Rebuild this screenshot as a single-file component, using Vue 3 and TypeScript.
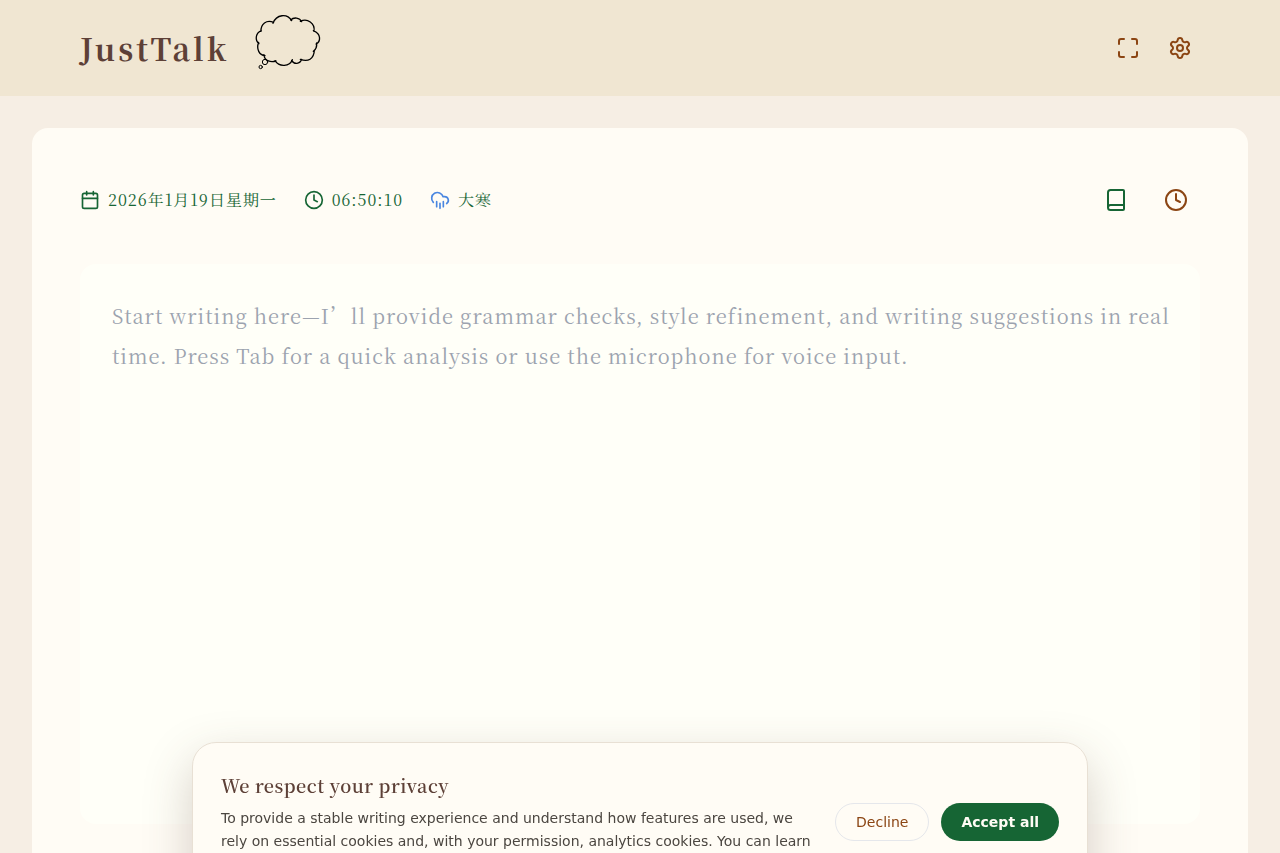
<script setup lang="ts">
import { ref } from 'vue'

const draft = ref('')
const showConsent = ref(true)
const dateLabel = '2026年1月19日星期一'
const timeLabel = '06:50:10'
const solarTerm = '大寒'
const placeholder =
  'Start writing here—I’ll provide grammar checks, style refinement, and writing suggestions in real time. Press Tab for a quick analysis or use the microphone for voice input.'
</script>

<template>
  <div class="page">
    <header class="topbar">
      <div class="brand">
        <h1 class="brand-name">JustTalk</h1>
        <svg class="bubble" viewBox="21 21 216 216" aria-hidden="true">
          <path
            d="M48 79C47 57 64 43 86 52M84 55C94 27 127 25 140 47M137 45C146 36 164 37 170 50M166 49C187 39 211 54 207 79M205 77C230 87 227 110 213 117M215 114C216 126 212 134 205 139M208 136C207 162 189 172 166 163M170 163C165 178 147 179 140 166M142 164C134 185 103 187 90 167M93 168C79 172 58 170 57 149M60 152C43 151 33 132 41 112M42 116C30 107 30 85 49 77"
          />
          <circle cx="60" cy="171" r="8" class="puff" />
          <circle cx="47" cy="186" r="5" class="puff" />
        </svg>
      </div>
      <nav class="actions" aria-label="Application">
        <button class="icon-button brown" type="button" aria-label="Fullscreen">
          <svg class="icon" viewBox="0 0 24 24">
            <path d="M8 3H5a2 2 0 0 0-2 2v3M21 8V5a2 2 0 0 0-2-2h-3M3 16v3a2 2 0 0 0 2 2h3M16 21h3a2 2 0 0 0 2-2v-3" />
          </svg>
        </button>
        <button class="icon-button brown" type="button" aria-label="Settings">
          <svg class="icon" viewBox="0 0 24 24">
            <path d="M9.671 4.136a2.34 2.34 0 0 1 4.659 0 2.34 2.34 0 0 0 3.319 1.915 2.34 2.34 0 0 1 2.33 4.033 2.34 2.34 0 0 0 0 3.831 2.34 2.34 0 0 1-2.33 4.033 2.34 2.34 0 0 0-3.319 1.915 2.34 2.34 0 0 1-4.659 0 2.34 2.34 0 0 0-3.32-1.915 2.34 2.34 0 0 1-2.33-4.033 2.34 2.34 0 0 0 0-3.831A2.34 2.34 0 0 1 6.35 6.051a2.34 2.34 0 0 0 3.319-1.915" />
            <circle cx="12" cy="12" r="3" />
          </svg>
        </button>
      </nav>
    </header>

    <main class="sheet">
      <div class="toolbar">
        <div class="meta">
          <span class="meta-item">
            <svg class="icon small" viewBox="0 0 24 24" aria-hidden="true">
              <path d="M8 2v4M16 2v4M3 10h18" />
              <rect x="3" y="4" width="18" height="18" rx="2" />
            </svg>
            <span>{{ dateLabel }}</span>
          </span>
          <span class="meta-item">
            <svg class="icon small" viewBox="0 0 24 24" aria-hidden="true">
              <circle cx="12" cy="12" r="10" />
              <path d="M12 6v6l4 2" />
            </svg>
            <time>{{ timeLabel }}</time>
          </span>
          <span class="meta-item">
            <svg class="icon small rain" viewBox="0 0 24 24" aria-hidden="true">
              <path d="M4 14.899A7 7 0 1 1 15.71 8h1.79a4.5 4.5 0 0 1 2.5 8.242M16 14v6M8 14v6M12 16v6" />
            </svg>
            <span>{{ solarTerm }}</span>
          </span>
        </div>
        <div class="tools">
          <button class="icon-button green" type="button" aria-label="Notebook">
            <svg class="icon" viewBox="0 0 24 24">
              <path d="M4 19.5v-15A2.5 2.5 0 0 1 6.5 2H19a1 1 0 0 1 1 1v18a1 1 0 0 1-1 1H6.5a1 1 0 0 1 0-5H20" />
            </svg>
          </button>
          <button class="icon-button brown" type="button" aria-label="History">
            <svg class="icon" viewBox="0 0 24 24">
              <circle cx="12" cy="12" r="10" />
              <path d="M12 6v6l4 2" />
            </svg>
          </button>
        </div>
      </div>
      <textarea v-model="draft" class="editor" aria-label="Writing area" :placeholder="placeholder"></textarea>
    </main>

    <section v-if="showConsent" class="consent" aria-labelledby="consent-title">
      <div class="consent-copy">
        <h2 id="consent-title" class="consent-title">We respect your privacy</h2>
        <p class="consent-text">
          To provide a stable writing experience and understand how features are used, we rely on
          essential cookies and, with your permission, analytics cookies. You can learn more in our
          Privacy Policy.
        </p>
      </div>
      <div class="consent-actions">
        <button class="pill" type="button" @click="showConsent = false">Decline</button>
        <button class="pill primary" type="button" @click="showConsent = false">Accept all</button>
      </div>
    </section>
  </div>
</template>

<style>
body {
  margin: 0;
  background: #f6eee4;
}
</style>

<style scoped>
.page {
  --serif: 'Noto Serif SC', 'Noto Serif CJK SC', 'Source Han Serif SC', 'Liberation Serif', 'Noto Sans CJK SC', serif;
  --green: #166534;
  --brown: #8b4513;
  --ink: #5d4037;
  min-height: 100vh;
  font-family: var(--serif);
  letter-spacing: 1px;
}

.page * {
  box-sizing: border-box;
}

.topbar {
  display: flex;
  align-items: center;
  justify-content: space-between;
  height: 96px;
  padding: 0 80px;
  background: #f0e6d2;
}

.brand {
  display: flex;
  align-items: center;
  gap: 23px;
}

.brand-name {
  margin: 0;
  color: var(--ink);
  font-size: 30px;
  font-weight: 700;
  line-height: 48px;
  letter-spacing: 3px;
}

.bubble {
  width: 72px;
  height: 72px;
  fill: none;
  stroke: #000;
  stroke-width: 4;
  stroke-linecap: round;
}

.puff {
  stroke-width: 3;
}

.actions,
.tools {
  display: flex;
  gap: 12px;
}

.icon-button {
  display: flex;
  padding: 8px;
  border: 0;
  border-radius: 8px;
  background: transparent;
  cursor: pointer;
}

.tools .icon-button {
  padding: 12px;
}

.brown {
  color: var(--brown);
}

.green {
  color: var(--green);
}

.icon {
  width: 24px;
  height: 24px;
  fill: none;
  stroke: currentColor;
  stroke-width: 2;
  stroke-linecap: round;
  stroke-linejoin: round;
}

.icon.small {
  width: 20px;
  height: 20px;
}

.rain {
  color: #4a86e0;
}

.sheet {
  margin: 32px;
  padding: 48px;
  border-radius: 16px;
  background: #fffcf5;
}

.toolbar {
  display: flex;
  align-items: center;
  justify-content: space-between;
  margin-bottom: 40px;
}

.meta {
  display: flex;
  gap: 27px;
  color: var(--green);
  font-size: 16px;
  line-height: 24px;
}

.meta-item {
  display: flex;
  align-items: center;
  gap: 8px;
}

.editor {
  display: block;
  width: 100%;
  height: 560px;
  padding: 32px 24px 32px 32px;
  border: 0;
  border-radius: 16px;
  outline: 0;
  resize: none;
  background: #fffff8;
  color: var(--ink);
  font-family: inherit;
  font-size: 20px;
  line-height: 40px;
  letter-spacing: 1px;
}

.editor::placeholder {
  color: #9ca3af;
  opacity: 1;
}

.consent {
  position: fixed;
  bottom: -48px;
  left: 0;
  right: 0;
  display: flex;
  align-items: center;
  gap: 20px;
  max-width: 896px;
  margin: 0 auto;
  padding: 28px 28px 24px;
  border: 1px solid #e8e0d4;
  border-radius: 24px;
  background: #fffcf5;
  box-shadow: 0 18px 48px rgba(93, 64, 55, 0.25);
}

.consent-copy {
  flex: 1;
}

.consent-title {
  margin: 0 0 8px;
  color: var(--ink);
  font-size: 18px;
  font-weight: 600;
  line-height: 28px;
  letter-spacing: 0.03em;
}

.consent-text {
  margin: 0;
  color: #4b4640;
  font-family: 'DejaVu Sans', sans-serif;
  font-size: 14px;
  line-height: 23px;
  letter-spacing: normal;
}

.consent-actions {
  display: flex;
  gap: 12px;
  margin-bottom: 4px;
}

.pill {
  padding: 0 20px;
  height: 38px;
  border: 1px solid #e5e7eb;
  border-radius: 19px;
  background: transparent;
  color: var(--brown);
  font-family: 'DejaVu Sans', sans-serif;
  font-size: 14px;
  cursor: pointer;
}

.pill.primary {
  border: 0;
  background: var(--green);
  color: #fffcf5;
  font-weight: 700;
}
</style>
